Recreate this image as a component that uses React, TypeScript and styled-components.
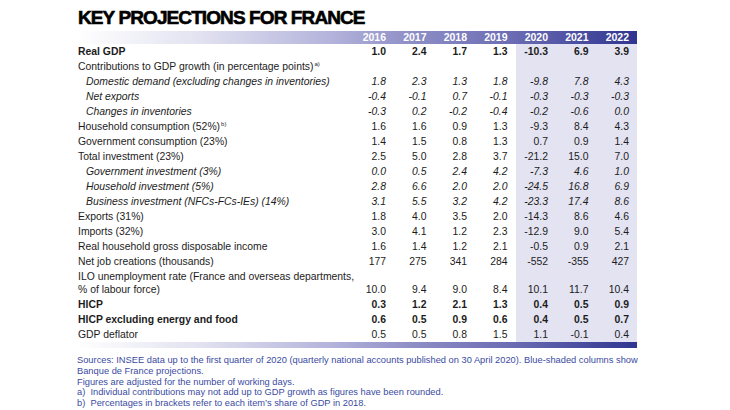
import React from 'react';
import styled, { createGlobalStyle } from 'styled-components';

const GlobalStyle = createGlobalStyle`
  html, body { margin: 0; padding: 0; background: #ffffff; }
  body { font-family: "Liberation Sans", Arial, sans-serif; }
`;

const Page = styled.div`
  width: 730px;
  height: 410px;
  overflow: hidden;
  box-sizing: border-box;
  padding: 7px 0 0 76px;
`;

const Title = styled.h1`
  margin: 0 0 0 2px;
  height: 24px;
  font-family: "Liberation Sans", Arial, sans-serif;
  font-size: 19px;
  line-height: 22px;
  font-weight: 700;
  letter-spacing: -0.9px;
  color: #000;
  -webkit-text-stroke: 0.6px #000;
`;

const Table = styled.div`
  width: 561px;
  display: flex;
  flex-direction: column;
`;

const gradient = `linear-gradient(to right, #ffffff 0%, #e2e2f1 22%, #b4b4dc 45%, #8e8ec6 60%, #6a6bb3 78%, #2f3590 100%)`;

const HeaderRow = styled.div`
  display: grid;
  grid-template-columns: 277.5px repeat(7, 40.5px);
  height: 13px;
  background: ${gradient};
`;

const Year = styled.div`
  color: #ffffff;
  font-weight: 700;
  font-size: 10.5px;
  line-height: 13px;
  text-align: right;
  padding-right: 8px;
`;

const Row = styled.div<{ $tall?: boolean }>`
  display: grid;
  grid-template-columns: 277.5px repeat(7, 40.5px);
  height: ${(p) => (p.$tall ? 28 : 15)}px;
  color: #1c1c1c;
  font-size: 10.4px;
`;

const Label = styled.div<{ $kind?: string; $tall?: boolean }>`
  display: flex;
  flex-direction: column;
  justify-content: center;
  padding-left: ${(p) => (p.$kind === 'sub' ? 10 : 2)}px;
  font-weight: ${(p) => (p.$kind === 'bold' ? 700 : 400)};
  font-style: ${(p) => (p.$kind === 'sub' ? 'italic' : 'normal')};
  line-height: ${(p) => (p.$tall ? '13.5px' : '15px')};
  white-space: nowrap;
`;

const Sup = styled.sup`
  font-size: 6px;
  vertical-align: 4px;
  line-height: 0;
  margin-left: 1px;
`;

const Value = styled.div<{ $kind?: string; $shaded?: boolean; $tall?: boolean }>`
  display: flex;
  align-items: ${(p) => (p.$tall ? 'flex-end' : 'center')};
  justify-content: flex-end;
  padding-right: 8px;
  padding-bottom: ${(p) => (p.$tall ? '1px' : '0')};
  line-height: 13.5px;
  background: ${(p) => (p.$shaded ? '#e3e3f2' : 'transparent')};
  font-weight: ${(p) => (p.$kind === 'bold' ? 700 : 400)};
  font-style: ${(p) => (p.$kind === 'sub' ? 'italic' : 'normal')};
`;

const BottomBar = styled.div`
  height: 6px;
  background: ${gradient};
`;

const Notes = styled.div`
  padding-top: 7px;
  padding-left: 1px;
  color: #3b4b9f;
  font-size: 9.3px;
  line-height: 10.75px;
`;

const NoteLine = styled.div`
  white-space: nowrap;
`;

type RowData = {
  label: string | string[];
  sup?: string;
  v: string[];
  kind?: 'bold' | 'sub';
  tall?: boolean;
};

const years = ['2016', '2017', '2018', '2019', '2020', '2021', '2022'];

const rows: RowData[] = [
  { label: 'Real GDP', v: ['1.0', '2.4', '1.7', '1.3', '-10.3', '6.9', '3.9'], kind: 'bold' },
  { label: 'Contributions to GDP growth (in percentage points)', sup: 'a)', v: [] },
  { label: 'Domestic demand (excluding changes in inventories)', v: ['1.8', '2.3', '1.3', '1.8', '-9.8', '7.8', '4.3'], kind: 'sub' },
  { label: 'Net exports', v: ['-0.4', '-0.1', '0.7', '-0.1', '-0.3', '-0.3', '-0.3'], kind: 'sub' },
  { label: 'Changes in inventories', v: ['-0.3', '0.2', '-0.2', '-0.4', '-0.2', '-0.6', '0.0'], kind: 'sub' },
  { label: 'Household consumption (52%)', sup: 'b)', v: ['1.6', '1.6', '0.9', '1.3', '-9.3', '8.4', '4.3'] },
  { label: 'Government consumption (23%)', v: ['1.4', '1.5', '0.8', '1.3', '0.7', '0.9', '1.4'] },
  { label: 'Total investment (23%)', v: ['2.5', '5.0', '2.8', '3.7', '-21.2', '15.0', '7.0'] },
  { label: 'Government investment (3%)', v: ['0.0', '0.5', '2.4', '4.2', '-7.3', '4.6', '1.0'], kind: 'sub' },
  { label: 'Household investment (5%)', v: ['2.8', '6.6', '2.0', '2.0', '-24.5', '16.8', '6.9'], kind: 'sub' },
  { label: 'Business investment (NFCs-FCs-IEs) (14%)', v: ['3.1', '5.5', '3.2', '4.2', '-23.3', '17.4', '8.6'], kind: 'sub' },
  { label: 'Exports (31%)', v: ['1.8', '4.0', '3.5', '2.0', '-14.3', '8.6', '4.6'] },
  { label: 'Imports (32%)', v: ['3.0', '4.1', '1.2', '2.3', '-12.9', '9.0', '5.4'] },
  { label: 'Real household gross disposable income', v: ['1.6', '1.4', '1.2', '2.1', '-0.5', '0.9', '2.1'] },
  { label: 'Net job creations (thousands)', v: ['177', '275', '341', '284', '-552', '-355', '427'] },
  {
    label: ['ILO unemployment rate (France and overseas departments,', '% of labour force)'],
    v: ['10.0', '9.4', '9.0', '8.4', '10.1', '11.7', '10.4'],
    tall: true,
  },
  { label: 'HICP', v: ['0.3', '1.2', '2.1', '1.3', '0.4', '0.5', '0.9'], kind: 'bold' },
  { label: 'HICP excluding energy and food', v: ['0.6', '0.5', '0.9', '0.6', '0.4', '0.5', '0.7'], kind: 'bold' },
  { label: 'GDP deflator', v: ['0.5', '0.5', '0.8', '1.5', '1.1', '-0.1', '0.4'] },
];

export default function App() {
  return (
    <>
      <GlobalStyle />
      <Page>
        <Title>KEY PROJECTIONS FOR FRANCE</Title>
        <Table>
          <HeaderRow>
            <div />
            {years.map((y) => (
              <Year key={y}>{y}</Year>
            ))}
          </HeaderRow>
          {rows.map((r, i) => (
            <Row key={i} $tall={r.tall}>
              <Label $kind={r.kind} $tall={r.tall}>
                {Array.isArray(r.label) ? (
                  r.label.map((l) => <span key={l}>{l}</span>)
                ) : (
                  <span>
                    {r.label}
                    {r.sup && <Sup>{r.sup}</Sup>}
                  </span>
                )}
              </Label>
              {years.map((y, j) => (
                <Value key={y} $kind={r.kind} $shaded={j >= 4} $tall={r.tall}>
                  {r.v[j] ?? ''}
                </Value>
              ))}
            </Row>
          ))}
          <BottomBar />
        </Table>
        <Notes>
          <NoteLine>
            Sources: INSEE data up to the first quarter of 2020 (quarterly national accounts published on 30 April 2020). Blue-shaded columns show
          </NoteLine>
          <NoteLine>Banque de France projections.</NoteLine>
          <NoteLine>Figures are adjusted for the number of working days.</NoteLine>
          <NoteLine>a)&nbsp; Individual contributions may not add up to GDP growth as figures have been rounded.</NoteLine>
          <NoteLine>b)&nbsp; Percentages in brackets refer to each item’s share of GDP in 2018.</NoteLine>
        </Notes>
      </Page>
    </>
  );
}
